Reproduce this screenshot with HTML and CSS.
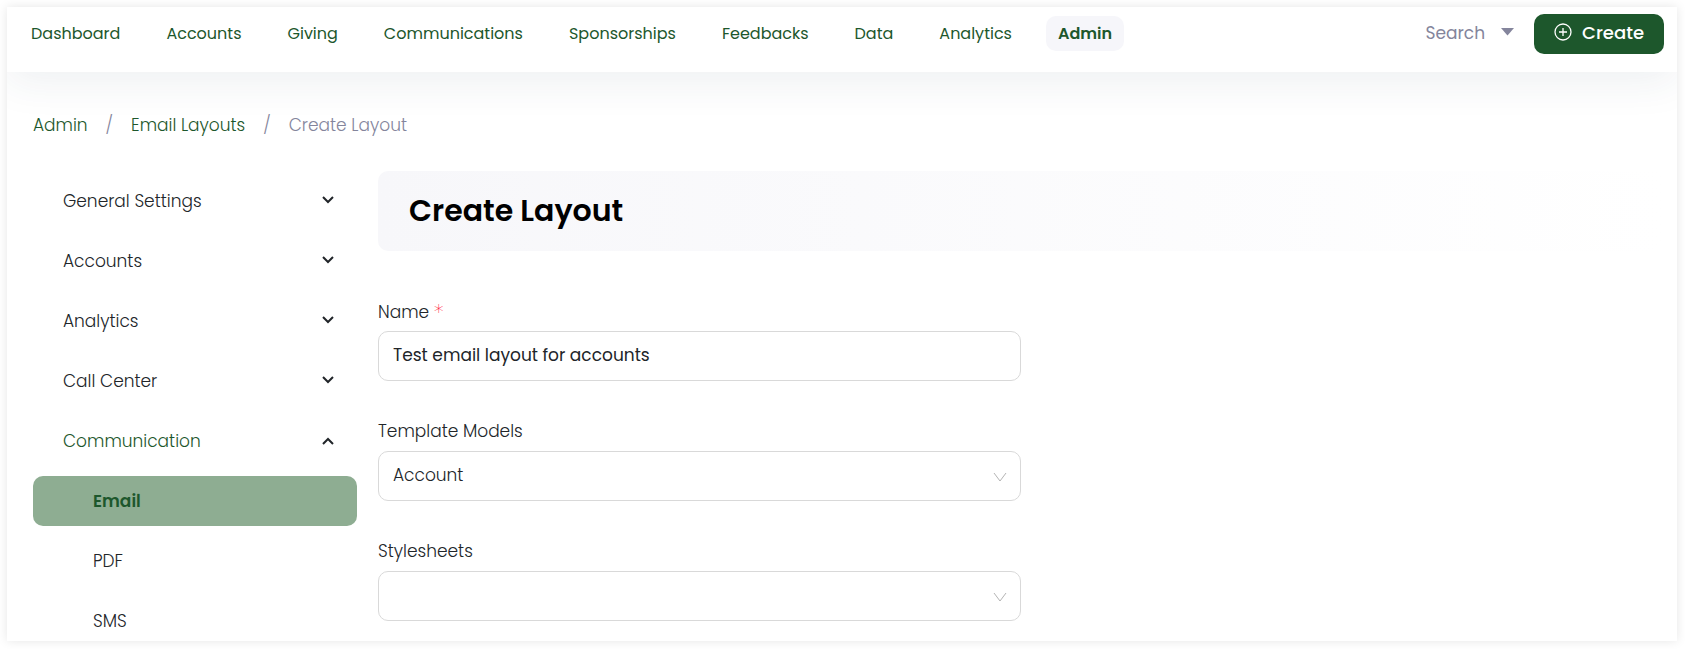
FILE: index.html
```html
<!DOCTYPE html>
<html lang="en">
<head>
<meta charset="utf-8">
<title>Create Layout</title>
<link rel="stylesheet" href="styles.css">
</head>
<body>
<div class="app">
  <header class="topbar">
    <nav class="nav" aria-label="Main">
      <a href="#">Dashboard</a>
      <a href="#">Accounts</a>
      <a href="#">Giving</a>
      <a href="#">Communications</a>
      <a href="#">Sponsorships</a>
      <a href="#">Feedbacks</a>
      <a href="#">Data</a>
      <a href="#">Analytics</a>
      <a href="#" class="active" aria-current="page">Admin</a>
    </nav>
    <div class="actions">
      <button type="button" class="search">Search
        <svg width="13" height="10" viewBox="0 0 13 10" aria-hidden="true"><path d="M0 0h13L6.500 7.500z" fill="currentColor"/></svg>
      </button>
      <button type="button" class="create">
        <svg width="18" height="20" viewBox="0 0 18 20" fill="none" stroke="currentColor" stroke-width="1.300" aria-hidden="true"><circle cx="9" cy="9" r="8"/><path d="M9 5v8M5 9h8"/></svg>
        Create
      </button>
    </div>
  </header>

  <nav class="breadcrumb" aria-label="Breadcrumb">
    <a href="#">Admin</a>
    <span class="sep">/</span>
    <a href="#">Email Layouts</a>
    <span class="sep">/</span>
    <span class="current">Create Layout</span>
  </nav>

  <div class="body">
    <nav class="sidebar" aria-label="Admin sections">
      <button type="button" class="group">General Settings <svg class="chevron" viewBox="0 0 12 10"><path d="M1 1l5 5 5-5"/></svg></button>
      <button type="button" class="group">Accounts <svg class="chevron" viewBox="0 0 12 10"><path d="M1 1l5 5 5-5"/></svg></button>
      <button type="button" class="group">Analytics <svg class="chevron" viewBox="0 0 12 10"><path d="M1 1l5 5 5-5"/></svg></button>
      <button type="button" class="group">Call Center <svg class="chevron" viewBox="0 0 12 10"><path d="M1 1l5 5 5-5"/></svg></button>
      <button type="button" class="group open" aria-expanded="true">Communication <svg class="chevron" viewBox="0 0 12 10"><path d="M1 8l5-5 5 5"/></svg></button>
      <a href="#" class="sub selected">Email</a>
      <a href="#" class="sub">PDF</a>
      <a href="#" class="sub">SMS</a>
    </nav>

    <main class="content">
      <h1>Create Layout</h1>
      <form class="form">
        <div class="field">
          <label for="name">Name <span class="required">*</span></label>
          <input id="name" type="text" value="Test email layout for accounts">
        </div>
        <div class="field">
          <label for="models">Template Models</label>
          <div class="select">
            <select id="models"><option>Account</option></select>
            <svg viewBox="0 0 14 14"><path d="M1 4l6 8 6-8"/></svg>
          </div>
        </div>
        <div class="field">
          <label for="sheets">Stylesheets</label>
          <div class="select">
            <select id="sheets"><option></option></select>
            <svg viewBox="0 0 14 14"><path d="M1 4l6 8 6-8"/></svg>
          </div>
        </div>
      </form>
    </main>
  </div>
</div>
</body>
</html>
```

FILE: styles.css
```css
:root {
  --green: #1d572c;
  --ink: #212529;
  --muted: #84859c;
  --line: #d9d9d9;
}

* {
  box-sizing: border-box;
}

body {
  margin: 0;
  padding: 7px 8px 8px 7px;
  height: 100vh;
  overflow: hidden;
  background: #fff;
  color: var(--ink);
  font: 300 17px/26px Poppins, Inter, "Open Sans", sans-serif;
}

a {
  color: inherit;
  text-decoration: none;
}

button,
input,
select {
  font: inherit;
  color: inherit;
}

button {
  border: 0;
  background: none;
  cursor: pointer;
}

.app {
  height: 100%;
  overflow: hidden;
  background: #fff;
  box-shadow: 0 0 10px rgba(0, 0, 0, 0.1);
}

.topbar {
  display: flex;
  justify-content: space-between;
  align-items: flex-start;
  height: 65px;
  padding: 7px 13px 0 12px;
  background: #fff;
  box-shadow: 0 10px 40px rgba(40, 60, 90, 0.08);
}

.nav {
  display: flex;
  gap: 22px;
  padding-top: 2px;
  color: var(--green);
  font-size: 16px;
  font-weight: 400;
}

.nav a {
  padding: 5px 12px 4px;
  border-radius: 10px;
}

.nav .active {
  background: #f6f6fa;
  font-weight: 600;
}

.actions {
  display: flex;
  align-items: center;
  gap: 20px;
}

.search {
  display: flex;
  align-items: center;
  gap: 16px;
  padding: 0 0 2px;
  color: var(--muted);
  font-weight: 400;
}

.create {
  display: flex;
  align-items: center;
  gap: 10px;
  height: 40px;
  padding: 0 20px 2px;
  border-radius: 10px;
  background: var(--green);
  color: #fff;
  font-size: 18px;
  font-weight: 500;
}

.breadcrumb {
  display: flex;
  gap: 18px;
  padding: 40px 26px 33px;
  color: var(--green);
}

.breadcrumb .sep,
.breadcrumb .current {
  color: var(--muted);
}

.body {
  display: grid;
  grid-template-columns: 324px 1fr;
  gap: 21px;
  padding: 0 13px 0 26px;
}

.sidebar {
  display: flex;
  flex-direction: column;
  gap: 10px;
  padding-top: 5px;
}

.group,
.sub {
  display: flex;
  align-items: center;
  justify-content: space-between;
  height: 50px;
  padding: 0 23px 0 30px;
  border-radius: 10px;
  text-align: left;
}

.sub {
  padding-left: 60px;
}

.open {
  color: var(--green);
}

.selected {
  background: #8ead92;
  color: var(--green);
  font-weight: 600;
}

.chevron {
  width: 12px;
  height: 10px;
  fill: none;
  stroke: #212529;
  stroke-width: 2;
}

h1 {
  margin: 0 0 47px;
  padding: 20px 31px;
  border-radius: 10px;
  background: linear-gradient(90deg, #f7f7fa, #fff);
  color: #000;
  font-size: 30px;
  line-height: 40px;
  font-weight: 600;
}

.form {
  display: grid;
  gap: 37px;
  width: 50%;
}

.field {
  display: grid;
  gap: 7px;
}

.field label {
  height: 26px;
}

.required {
  color: #ff1a3c;
  font-family: "DejaVu Sans", sans-serif;
  font-size: 20px;
}

input,
select {
  width: 100%;
  height: 50px;
  padding: 0 14px 2px;
  border: 1px solid var(--line);
  border-radius: 10px;
  background: none;
  appearance: none;
}

input {
  font-weight: 400;
}

.select {
  display: grid;
  align-items: center;
}

.select > * {
  grid-area: 1 / 1;
}

.select svg {
  justify-self: end;
  width: 14px;
  height: 14px;
  margin-right: 14px;
  fill: none;
  stroke: #b4b4b4;
  stroke-width: 1;
  pointer-events: none;
}
```
